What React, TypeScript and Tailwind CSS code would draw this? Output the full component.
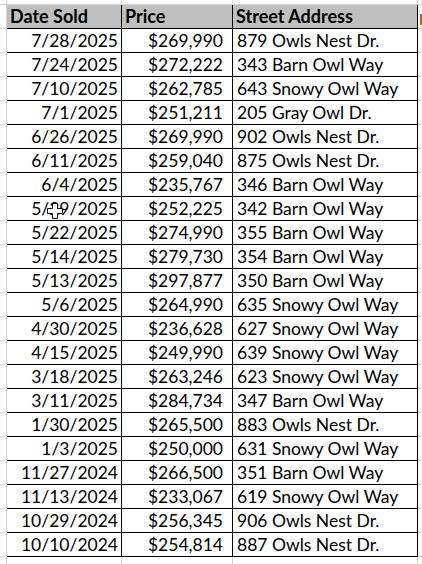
import React from "react";

const rows: [string, string, string][] = [
  ["7/28/2025", "$269,990", "879 Owls Nest Dr."],
  ["7/24/2025", "$272,222", "343 Barn Owl Way"],
  ["7/10/2025", "$262,785", "643 Snowy Owl Way"],
  ["7/1/2025", "$251,211", "205 Gray Owl Dr."],
  ["6/26/2025", "$269,990", "902 Owls Nest Dr."],
  ["6/11/2025", "$259,040", "875 Owls Nest Dr."],
  ["6/4/2025", "$235,767", "346 Barn Owl Way"],
  ["5/29/2025", "$252,225", "342 Barn Owl Way"],
  ["5/22/2025", "$274,990", "355 Barn Owl Way"],
  ["5/14/2025", "$279,730", "354 Barn Owl Way"],
  ["5/13/2025", "$297,877", "350 Barn Owl Way"],
  ["5/6/2025", "$264,990", "635 Snowy Owl Way"],
  ["4/30/2025", "$236,628", "627 Snowy Owl Way"],
  ["4/15/2025", "$249,990", "639 Snowy Owl Way"],
  ["3/18/2025", "$263,246", "623 Snowy Owl Way"],
  ["3/11/2025", "$284,734", "347 Barn Owl Way"],
  ["1/30/2025", "$265,500", "883 Owls Nest Dr."],
  ["1/3/2025", "$250,000", "631 Snowy Owl Way"],
  ["11/27/2024", "$266,500", "351 Barn Owl Way"],
  ["11/13/2024", "$233,067", "619 Snowy Owl Way"],
  ["10/29/2024", "$256,345", "906 Owls Nest Dr."],
  ["10/10/2024", "$254,814", "887 Owls Nest Dr."],
];

function Cursor() {
  return (
    <svg
      className="absolute left-[47px] top-[203px]"
      width="16"
      height="16"
      viewBox="0 0 16 16"
    >
      <path
        d="M5.5 0.5h5v5h5v5h-5v5h-5v-5h-5v-5h5z"
        fill="#fff"
        stroke="#000"
        strokeWidth="1"
      />
    </svg>
  );
}

export default function App() {
  return (
    <div
      className="relative w-[422px] h-[564px] overflow-hidden bg-white text-black"
      style={{ fontFamily: "Lato, 'Open Sans', sans-serif" }}
    >
      {/* top strip */}
      <div className="flex h-[5px] border-b border-[#d4d4d4]">
        <div className="w-[7px] border-r border-[#d4d4d4]" />
        <div className="w-[115px] border-r border-[#d4d4d4]" />
        <div className="w-[111px] border-r border-[#d4d4d4]" />
        <div className="w-[185px] border-r border-[#d4d4d4]" />
      </div>
      {/* header */}
      <div className="flex h-[24px] text-[18px] font-bold leading-none">
        <div className="w-[7px] border-r border-b border-[#d4d4d4]" />
        <div className="w-[115px] bg-[#bfbfbf] border-r border-b border-black flex items-end pb-[3px] pl-[3px]">
          Date Sold
        </div>
        <div className="w-[111px] bg-[#bfbfbf] border-r border-b border-black flex items-end pb-[3px] pl-[3px]">
          Price
        </div>
        <div className="w-[185px] bg-[#bfbfbf] border-r border-b border-black flex items-end pb-[3px] pl-[3px]">
          Street Address
        </div>
        <div className="w-[4px] border-b border-[#d4d4d4] relative">
          <div className="absolute left-[2px] top-[9px] w-[2px] h-[11px] bg-[#b5651d]" />
        </div>
      </div>
      {rows.map(([d, p, a], i) => (
        <div key={i} className="flex h-[24px] text-[17.5px] leading-none">
          <div className="w-[7px] border-r border-b border-[#d4d4d4]" />
          <div className="w-[115px] border-r border-b border-black flex items-end justify-end pb-[3px] pr-[3px]">
            {d}
          </div>
          <div className="w-[111px] border-r border-b border-black flex items-end justify-end pb-[3px] pr-[9px]">
            {p}
          </div>
          <div className="w-[185px] border-r border-b border-black flex items-end pb-[3px] pl-[4px]">
            {a}
          </div>
          <div className="w-[4px] border-b border-[#d4d4d4]" />
        </div>
      ))}
      {/* below */}
      <div className="flex h-[10px]">
        <div className="w-[7px] border-r border-[#d4d4d4]" />
        <div className="w-[115px] border-r border-[#d4d4d4]" />
        <div className="w-[111px] border-r border-[#d4d4d4]" />
        <div className="w-[185px] border-r border-[#d4d4d4]" />
      </div>
      <Cursor />
    </div>
  );
}
